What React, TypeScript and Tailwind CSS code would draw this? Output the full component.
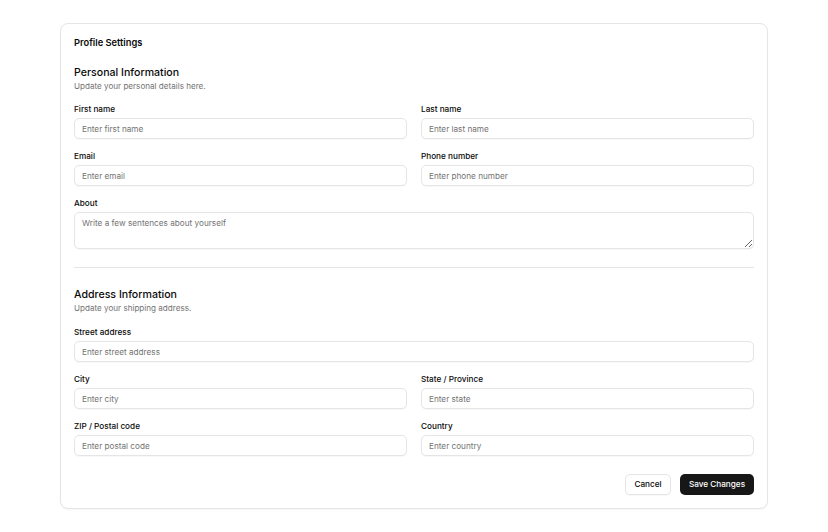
import React from "react";

// Profile settings form card: personal + address sections, actions at the bottom.

type Field = {
  id: string;
  label: string;
  placeholder: string;
  full?: boolean;
};

const PERSONAL: Field[] = [
  { id: "firstName", label: "First name", placeholder: "Enter first name" },
  { id: "lastName", label: "Last name", placeholder: "Enter last name" },
  { id: "email", label: "Email", placeholder: "Enter email" },
  { id: "phone", label: "Phone number", placeholder: "Enter phone number" },
];

const ADDRESS: Field[] = [
  { id: "street", label: "Street address", placeholder: "Enter street address", full: true },
  { id: "city", label: "City", placeholder: "Enter city" },
  { id: "state", label: "State / Province", placeholder: "Enter state" },
  { id: "zip", label: "ZIP / Postal code", placeholder: "Enter postal code" },
  { id: "country", label: "Country", placeholder: "Enter country" },
];

function Label({ htmlFor, children }: { htmlFor: string; children: React.ReactNode }) {
  return (
    <label
      htmlFor={htmlFor}
      className="block h-[10px] text-[8.2px] leading-[10px] font-medium text-[#0a0a0a]"
    >
      {children}
    </label>
  );
}

function TextField({ field }: { field: Field }) {
  return (
    <div className={field.full ? "col-span-2" : ""}>
      <Label htmlFor={field.id}>{field.label}</Label>
      <input
        id={field.id}
        placeholder={field.placeholder}
        className="mt-[4px] block h-[21px] w-full rounded-[5px] border border-[#e5e5e5] bg-white px-[7px] text-[8.2px] text-[#0a0a0a] shadow-[0_1px_1px_rgba(0,0,0,0.03)] outline-none placeholder:text-[#737373]"
      />
    </div>
  );
}

function SectionHeader({ title, description }: { title: string; description: string }) {
  return (
    <div>
      <h2 className="h-[14px] text-[10.6px] leading-[14px] font-medium text-[#0a0a0a]">
        {title}
      </h2>
      <p className="h-[12px] text-[8.1px] leading-[12px] text-[#737373]">{description}</p>
    </div>
  );
}

export default function App() {
  return (
    <div
      className="min-h-screen bg-white pt-[23px]"
      style={{ fontFamily: "Inter, 'Noto Sans', sans-serif" }}
    >
      <div className="mx-auto w-[708px] rounded-[8px] border border-[#e5e5e5] bg-white px-[13px] pt-[13px] pb-[13px] shadow-[0_1px_2px_rgba(0,0,0,0.04)]">
        <h1 className="h-[12px] text-[9.3px] leading-[12px] font-semibold text-[#0a0a0a]">
          Profile Settings
        </h1>

        {/* Personal information */}
        <div className="mt-[17px]">
          <SectionHeader
            title="Personal Information"
            description="Update your personal details here."
          />
          <div className="mt-[12px] grid grid-cols-2 gap-x-[14px] gap-y-[12px]">
            {PERSONAL.map((f) => (
              <TextField key={f.id} field={f} />
            ))}
            <div className="col-span-2">
              <Label htmlFor="about">About</Label>
              <textarea
                id="about"
                placeholder="Write a few sentences about yourself"
                className="mt-[4px] block h-[37px] min-h-[20px] w-full rounded-[5px] border border-[#e5e5e5] bg-white px-[7px] py-[4px] text-[8.2px] leading-[12px] text-[#0a0a0a] shadow-[0_1px_1px_rgba(0,0,0,0.03)] outline-none placeholder:text-[#737373]"
              />
            </div>
          </div>
        </div>

        <div className="mt-[18px] h-px bg-[#e5e5e5]" />

        {/* Address information */}
        <div className="mt-[20px]">
          <SectionHeader title="Address Information" description="Update your shipping address." />
          <div className="mt-[13px] grid grid-cols-2 gap-x-[14px] gap-y-[12px]">
            {ADDRESS.map((f) => (
              <TextField key={f.id} field={f} />
            ))}
          </div>
        </div>

        {/* Actions */}
        <div className="mt-[18px] flex justify-end gap-[9px]">
          <button
            type="button"
            className="h-[21px] w-[46px] rounded-[5px] border border-[#e5e5e5] bg-white text-[8.2px] font-medium text-[#0a0a0a] shadow-[0_1px_1px_rgba(0,0,0,0.03)]"
          >
            Cancel
          </button>
          <button
            type="button"
            className="h-[21px] w-[74px] rounded-[5px] bg-[#171717] text-[8.2px] font-medium text-white"
          >
            Save Changes
          </button>
        </div>
      </div>
    </div>
  );
}
